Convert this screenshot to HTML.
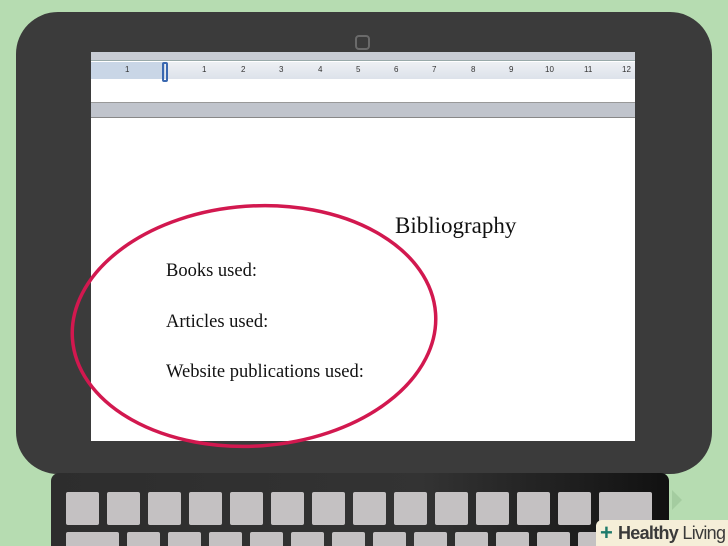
<!DOCTYPE html>
<html style="overflow:hidden;width:728px;height:546px"><head><meta charset="utf-8"><style>
*{margin:0;padding:0;box-sizing:border-box}
body{width:728px;height:546px;overflow:hidden;background:#b6dcb1;position:relative;font-family:"Liberation Serif",serif}
.tab{position:absolute;left:16px;top:12px;width:696px;height:462px;background:#3b3b3b;border-radius:42px}
.cam{position:absolute;left:355px;top:35px;width:15px;height:15px;border:2px solid #6a6a6a;border-radius:4px}
.scr{position:absolute;left:91px;top:52px;width:544px;height:389px;background:#fff;overflow:hidden}
.tabs{position:absolute;left:0;top:0;width:544px;height:9px;background:#c8ccd4;border-bottom:1px solid #9aa}
.ruler{position:absolute;left:0;top:10px;width:544px;height:17px;background:linear-gradient(#eef0f4,#dde2ea);font:8px "Liberation Sans",sans-serif;color:#333}
.ruler .blue{position:absolute;left:0;top:0;width:74px;height:17px;background:#c9d6e6}
.band{position:absolute;left:0;top:50px;width:544px;height:16px;background:#c0c4cc;border-top:1px solid #999;border-bottom:1px solid #888}
.t{position:absolute;color:#111;white-space:nowrap}
.kb{position:absolute;left:51px;top:473px;width:618px;height:73px;background:linear-gradient(90deg,#2d2d2d,#333 60%,#111);border-radius:8px 8px 0 0}
.key{position:absolute;width:33px;height:33px;background:#c4c1c2;border-radius:2px}
.logo{position:absolute;left:596px;top:520px;width:132px;height:26px;background:#f5eed8;border-radius:6px 0 0 0;font:18px "Liberation Sans",sans-serif;color:#3a3a3a;padding:3px 0 0 22px;letter-spacing:-0.7px;white-space:nowrap;overflow:hidden}
</style></head><body>
<div class="tab"></div>
<div class="cam"></div>
<div class="scr">
 <div class="tabs"></div>
 <div class="ruler"><div class="blue"></div>
  <span style="position:absolute;left:34px;top:3px">1</span>
  <span style="position:absolute;left:111px;top:3px">1</span>
  <span style="position:absolute;left:150px;top:3px">2</span>
  <span style="position:absolute;left:188px;top:3px">3</span>
  <span style="position:absolute;left:227px;top:3px">4</span>
  <span style="position:absolute;left:265px;top:3px">5</span>
  <span style="position:absolute;left:303px;top:3px">6</span>
  <span style="position:absolute;left:341px;top:3px">7</span>
  <span style="position:absolute;left:380px;top:3px">8</span>
  <span style="position:absolute;left:418px;top:3px">9</span>
  <span style="position:absolute;left:454px;top:3px">10</span>
  <span style="position:absolute;left:493px;top:3px">11</span>
  <span style="position:absolute;left:531px;top:3px">12</span>
  <div style="position:absolute;left:71px;top:0;width:6px;height:20px;border:2px solid #3a68b0;border-radius:2px"></div>
 </div>
 <div class="band"></div>
 <div class="t" style="left:304px;top:161px;font-size:23px">Bibliography</div>
 <div class="t" style="left:75px;top:209px;font-size:18.5px">Books used:</div>
 <div class="t" style="left:75px;top:260px;font-size:18.5px">Articles used:</div>
 <div class="t" style="left:75px;top:310px;font-size:18.5px">Website publications used:</div>
</div>
<svg style="position:absolute;left:0;top:0" width="728" height="546"><ellipse cx="254" cy="326" rx="182" ry="120" transform="rotate(-4 254 326)" fill="none" stroke="#d2184f" stroke-width="3.5"/></svg>
<div class="kb"></div>
<div id="keys"></div>
<div style="position:absolute;left:672px;top:490px;width:0;height:0;border-left:10px solid #a4cca0;border-top:10px solid transparent;border-bottom:10px solid transparent"></div>
<div class="logo"><span style="position:absolute;left:4px;top:3px;color:#1e7a6a;font-weight:bold;font-size:22px;line-height:20px">+</span><b>Healthy</b> Living</div>
<script>
var h='';for(var i=0;i<13;i++){h+='<div class="key" style="left:'+(66+i*41)+'px;top:492px"></div>'}
h+='<div class="key" style="left:599px;top:492px;width:53px"></div>';
h+='<div class="key" style="left:66px;top:532px;width:53px"></div>';
for(var i=0;i<12;i++){h+='<div class="key" style="left:'+(127+i*41)+'px;top:532px"></div>'}
document.getElementById('keys').innerHTML=h;
</script>
</body></html>
